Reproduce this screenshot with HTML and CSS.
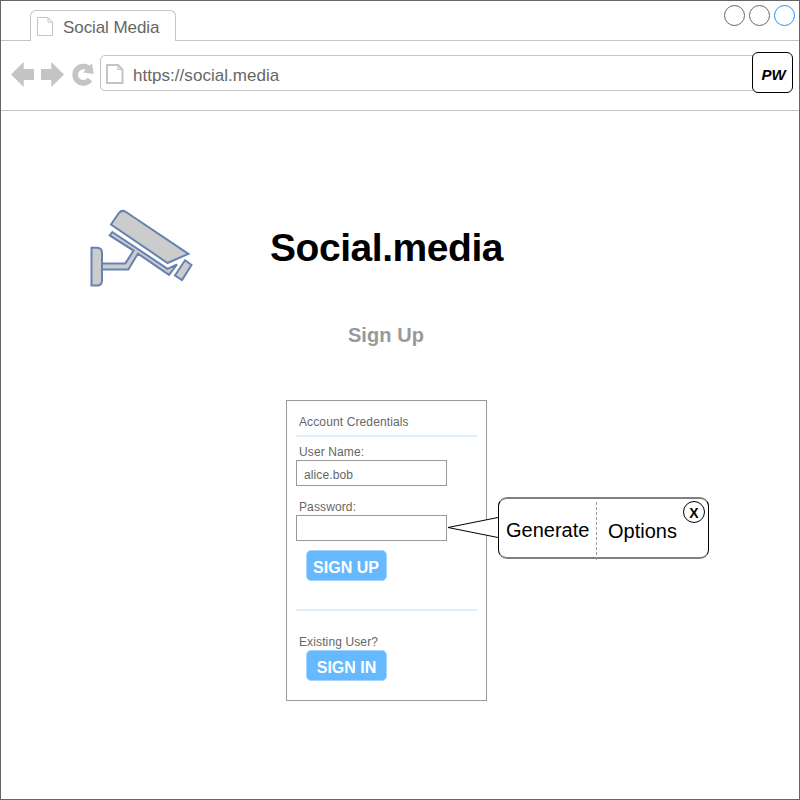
FILE: index.html
```
<!DOCTYPE html>
<html lang="en">
<head>
<meta charset="utf-8">
<title>Social Media</title>
<link rel="stylesheet" href="styles.css">
</head>
<body>
<div class="window">
  <header class="tabbar">
    <div class="tab">
      <svg class="tab-icon" width="17" height="20" viewBox="0 0 17 20"><path d="M.5 .5H11L15.500 5V18.500H.5ZM11 .5V5H15.500" fill="#fff" stroke="#c4c4c4"/></svg>
      <span class="tab-title">Social Media</span>
    </div>
    <div class="controls"><i class="dot"></i><i class="dot"></i><i class="dot dot-blue"></i></div>
  </header>
  <nav class="toolbar">
    <svg class="nav-icons" width="84" height="28" viewBox="11 61 84 28" fill="#c4c4c4">
      <path d="M11 74.500L23.700 62V69H34V80H23.700V87Z"/>
      <path d="M64 74.500L51.300 62V69H41V80H51.300V87Z"/>
      <path d="M89.500 69.300A8.200 8.200 0 1 0 90 79.500" fill="none" stroke="#c4c4c4" stroke-width="5.600"/>
      <path d="M92 63.300L93.600 74L83.200 72.600Z"/>
    </svg>
    <div class="address">
      <svg class="page-icon" width="18" height="21" viewBox="0 0 18 21"><path d="M1 1H12L16.500 5.500V19H1Z" fill="#fff" stroke="#c4c4c4" stroke-width="2"/><path d="M12 1V5.500H16.500" fill="none" stroke="#c4c4c4" stroke-width="1.200"/></svg>
      <span class="url">https://social.media</span>
    </div>
    <div class="pw"><span>PW</span></div>
  </nav>
  <main class="page">
    <div class="brand">
      <svg class="camera" width="106" height="82" viewBox="88 207 106 82" fill="#ccc" stroke="#6881b3" stroke-width="2">
        <path d="M91.500 247.700H97Q102 247.700 102 253V280.500Q102 285.500 97 285.500H91.500Z"/>
        <path d="M112.300 232L109.700 235.400L133.600 250.600L125.300 263.400H102V269.400H128.300L138 253.600L169 274.800L177 264.500L167.500 268.800Z"/>
        <path d="M111 224.500L119 212.800Q122 209.400 126 212L188.400 253.900L167.500 263Z"/>
        <path d="M185 260.300L191.500 265L182 280L175 275.500Z"/>
      </svg>
      <h1 class="name">Social.media</h1>
    </div>
    <h2 class="subtitle">Sign Up</h2>
    <form class="card">
      <div class="heading">Account Credentials</div>
      <div class="rule"></div>
      <label class="label user">User Name:</label>
      <div class="field">alice.bob</div>
      <label class="label password">Password:</label>
      <div class="field anchor">
        <div class="callout">
          <svg class="pointer" width="52" height="24" viewBox="0 0 52 24"><path d="M51 2.500L1 12.500L51 22.500" fill="#fff" stroke="#000"/></svg>
          <span class="option generate">Generate</span>
          <span class="option options">Options</span>
          <span class="close"><span>X</span></span>
        </div>
      </div>
      <div class="button"><span class="up">SIGN UP</span></div>
      <div class="rule second"></div>
      <div class="label existing">Existing User?</div>
      <div class="button in"><span class="si">SIGN IN</span></div>
    </form>
  </main>
</div>
</body>
</html>
```
FILE: styles.css
```
* { box-sizing: border-box; }
body {
  margin: 0;
  background: #fff;
  font-family: "Liberation Sans", Arial, sans-serif;
  color: #666;
}
svg { display: block; flex: none; }
span, h1, h2, label { white-space: nowrap; }
.window { width: 800px; height: 800px; border: 1px solid #666; overflow: hidden; }

.tabbar {
  display: flex;
  justify-content: space-between;
  height: 40px;
  padding: 4px 4px 0 29px;
  border-bottom: 1px solid #c4c4c4;
}
.tab {
  display: flex;
  width: 146px;
  height: 31px;
  margin-top: 5px;
  padding: 6px 0 0 6px;
  border: 1px solid #c4c4c4;
  border-bottom: 0;
  border-radius: 6px 6px 0 0;
  background: #fff;
}
.tab-title { margin: 1px 0 0 9px; font-size: 17px; line-height: 20px; letter-spacing: -.08px; }
.controls { display: flex; gap: 4px; }
.dot { width: 21px; height: 21px; border: 1px solid #666; border-radius: 50%; }
.dot-blue { border-color: #1e90ff; }

.toolbar {
  display: flex;
  align-items: flex-start;
  height: 70px;
  padding: 11px 6px 0 10px;
  border-bottom: 1px solid #c4c4c4;
}
.nav-icons { margin-top: 9px; }
.address {
  display: flex;
  width: 657px;
  height: 36px;
  margin: 3px 0 0 5px;
  padding: 8px 0 0 5px;
  border: 1px solid #c4c4c4;
  border-radius: 5px;
}
.url { margin: 2px 0 0 9px; font-size: 17px; line-height: 20px; letter-spacing: .04px; }
.pw {
  display: flex;
  align-items: center;
  justify-content: center;
  width: 41px;
  height: 41px;
  margin-left: -5px;
  border: 1px solid #000;
  border-radius: 6px;
  background: #fff;
  color: #000;
  font-size: 15px;
  font-weight: bold;
  font-style: italic;
  padding: 3px 0 0 2px;
}

.page { padding: 96px 0 0 87px; }
.brand { display: flex; height: 82px; }
.name { margin: 18px 0 0 76px; color: #000; font-size: 39px; line-height: 46px; letter-spacing: -.45px; }
.subtitle { width: 202px; margin: 34px 0 0 197px; text-align: center; color: #999; font-size: 20px; line-height: 24px; letter-spacing: .1px; }

.card {
  width: 201px;
  height: 301px;
  margin: 53px 0 0 198px;
  padding: 14px 9px 0;
  border: 1px solid #999;
  font-size: 12px;
  line-height: 14px;
  letter-spacing: .12px;
}
.heading { padding-left: 3px; }
.rule { width: 181px; height: 2px; margin-top: 6px; background: #dff0ff; }
.label { display: block; height: 14px; padding-left: 3px; }
.user { margin-top: 8px; }
.password { margin-top: 14px; }
.field { width: 151px; height: 26px; margin-top: 1px; padding: 7px 7px 0; border: 1px solid #999; background: #fff; }
.anchor { position: relative; }
.button {
  display: flex;
  align-items: center;
  justify-content: center;
  width: 81px;
  height: 31px;
  margin: 9px 0 0 10px;
  padding-top: 5px;
  padding-right: 1px;
  border: 1px solid #a3d5ff;
  border-radius: 5px;
  background: #66b8ff;
  color: #fff;
  font-size: 16px;
  font-weight: bold;
  letter-spacing: 0;
}
.second { margin-top: 28px; }
.existing { margin-top: 24px; }
.in { margin-top: 1px; padding-right: 0; }

.callout {
  position: absolute;
  left: 201px;
  top: -19px;
  display: flex;
  width: 211px;
  height: 62px;
  border: 1px solid #000;
  border-top: 2px solid #808080;
  border-bottom: 2px solid #808080;
  border-radius: 9px;
  background: #fff;
  color: #000;
  font-size: 20px;
  line-height: 24px;
  letter-spacing: 0;
}
.pointer { position: absolute; left: -52px; top: 16px; }
.generate { width: 98px; height: 58px; margin-top: 3px; padding: 16px 0 0 7px; border-right: 1px dashed #999; }
.options { padding: 20px 0 0 11px; }
.close {
  position: absolute;
  right: 3px;
  top: 2px;
  display: flex;
  align-items: center;
  justify-content: center;
  width: 22px;
  height: 22px;
  padding-top: 2px;
  border: 1px solid #000;
  border-radius: 50%;
  font-size: 14px;
  font-weight: bold;
}
```
